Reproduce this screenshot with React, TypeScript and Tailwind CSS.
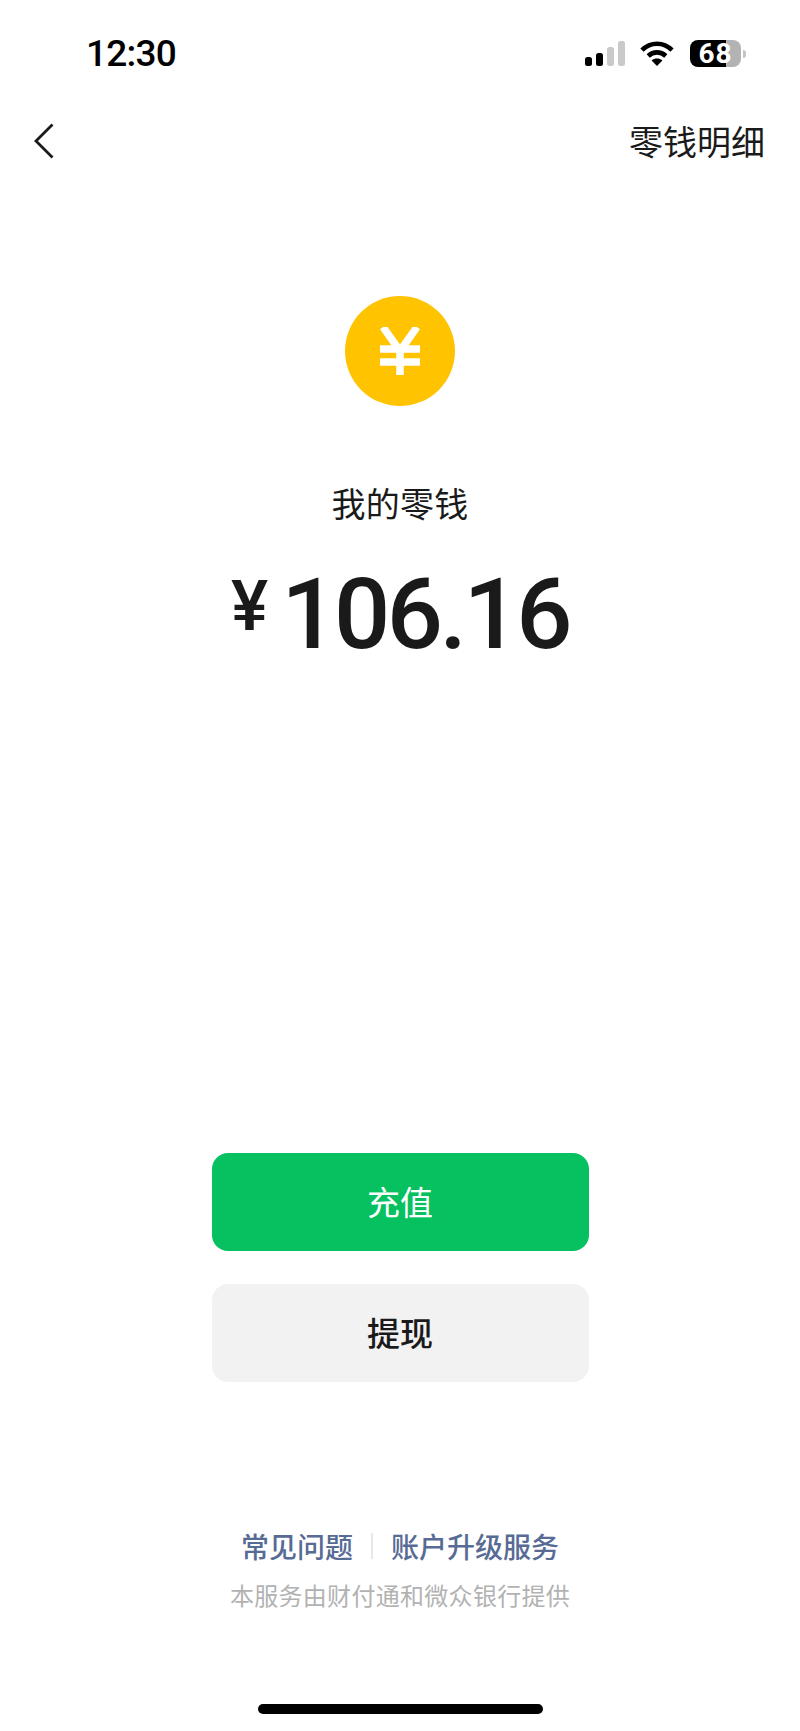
const cjk = { fontFamily: '"Noto Sans CJK SC", sans-serif' };

function StatusIcons() {
  return (
    <div className="flex items-center">
      {/* signal */}
      <svg width="40" height="25" viewBox="0 0 40 25" className="mr-[15px]">
        <rect x="0" y="16" width="7" height="9" rx="2.5" fill="#000" />
        <rect x="11" y="12" width="7" height="13" rx="2.5" fill="#000" />
        <rect x="22" y="6" width="7" height="19" rx="2.5" fill="#c9c9c9" />
        <rect x="33" y="0" width="7" height="25" rx="2.5" fill="#c9c9c9" />
      </svg>
      {/* wifi */}
      <svg width="34" height="25" viewBox="0 0 34 25" className="mr-[16px]" fill="none" stroke="#000" strokeWidth="4.6">
        <path d="M2 9.2C10.5 .6 23.5 .6 32 9.2" />
        <path d="M8.2 15C13.4 10.2 20.6 10.2 25.8 15" />
        <path d="M17 25L11.6 19.4C14.8 16.8 19.2 16.8 22.4 19.4Z" fill="#000" stroke="none" />
      </svg>
      {/* battery */}
      <div
        className="flex h-[27px] w-[51px] items-center justify-center rounded-[8px] bg-[linear-gradient(90deg,#000_70%,#b3b3b3_70%)] text-[28px] font-bold leading-none tracking-[1px] text-white"
        style={{ fontFamily: 'Roboto, sans-serif' }}
      >
        68
      </div>
      <div className="ml-[2px] h-[8px] w-[3px] rounded-r-full bg-[#c4c4c4]" />
    </div>
  );
}

export default function App() {
  return (
    <div className="flex h-[1731px] w-[800px] flex-col items-center overflow-hidden bg-white" style={cjk}>
      {/* status bar */}
      <div className="flex h-[67px] w-full items-end justify-between pl-[86px] pr-[54px]">
        <span
          className="mb-[-4px] text-[37px] font-medium leading-[35px] tracking-[-0.8px] text-black"
          style={{ fontFamily: 'Roboto, sans-serif' }}
        >
          12:30
        </span>
        <StatusIcons />
      </div>

      {/* nav */}
      <div className="mt-[54px] flex h-[40px] w-full items-center justify-between pl-[34px] pr-[35px]">
        <svg width="20" height="36" viewBox="0 0 20 36" fill="none" stroke="#1a1a1a" strokeWidth="2.8">
          <path d="M18.5 1.5L2 18L18.5 34.5" />
        </svg>
        <span className="text-[34px] leading-[40px] text-[#1a1a1a]">零钱明细</span>
      </div>

      {/* coin */}
      <div className="mt-[135px] flex h-[110px] w-[110px] items-center justify-center rounded-full bg-[#ffc300]">
        <svg width="40" height="48" viewBox="0 0 40 48" fill="none" stroke="#fff" strokeWidth="7.5">
          <path d="M3 0L20 24L37 0" />
          <path d="M20 22V48" />
          <path d="M0 22H40" />
          <path d="M0 35H40" />
        </svg>
      </div>

      <div className="mt-[72px] text-[34px] leading-[50px] tracking-[0.3px] text-[#1a1a1a]">我的零钱</div>

      {/* balance */}
      <div
        className="mt-[38px] flex items-start text-[#1a1a1a]"
        style={{ fontFamily: 'Roboto, sans-serif' }}
      >
        <span className="mr-[13px] text-[70px] font-medium leading-[80px]">¥</span>
        <span className="text-[99px] font-medium leading-[96px] tracking-[-3.5px]">106.16</span>
      </div>

      <div className="flex-1" />

      {/* buttons */}
      <div className="flex w-[377px] flex-col gap-[33px]">
        <button className="flex h-[98px] items-center justify-center rounded-[16px] bg-[#07c160] text-[33px] text-white">
          充值
        </button>
        <button className="flex h-[98px] items-center justify-center rounded-[16px] bg-[#f2f2f2] text-[33px] font-medium text-[#1a1a1a]">
          提现
        </button>
      </div>

      {/* links */}
      <div className="mt-[149px] flex h-[30px] items-center text-[28px] font-medium leading-[30px] text-[#576b95]">
        <span>常见问题</span>
        <span className="mx-[18px] h-[26px] w-[2px] bg-[#e8e8e8]" />
        <span>账户升级服务</span>
      </div>
      <div className="mt-[18px] text-[24px] leading-[32px] tracking-[0.3px] text-[#b2b2b2]">本服务由财付通和微众银行提供</div>

      {/* home indicator */}
      <div className="mb-[17px] mt-[93px] h-[10px] w-[285px] rounded-full bg-black" />
    </div>
  );
}
